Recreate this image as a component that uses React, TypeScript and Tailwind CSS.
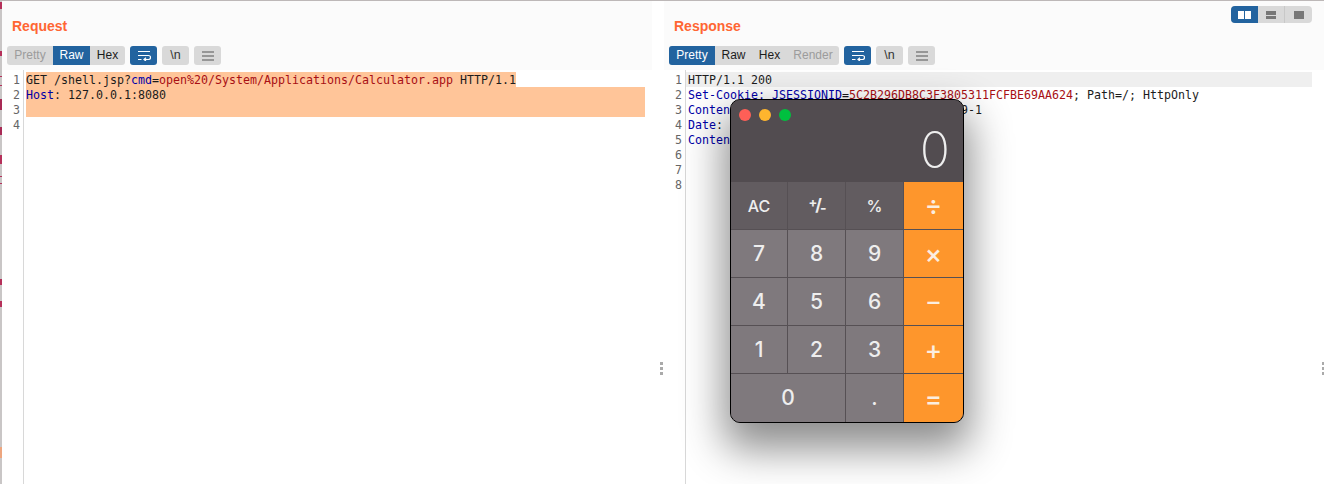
const tabWidths: Record<string, string> = {
  Pretty: "w-[46px]",
  Raw: "w-[37px]",
  Hex: "w-[35px]",
  Render: "w-[52px]",
};

const Tabs = ({ items, active, disabled }: { items: string[]; active: string; disabled: string[] }) => (
  <div className="flex h-[19px] overflow-hidden rounded-[3px] bg-[#d9d9d9] text-[12px] leading-[19px]">
    {items.map((t) => (
      <div
        key={t}
        className={
          "text-center " +
          tabWidths[t] +
          (t === active ? " bg-[#22639f] text-white" : disabled.includes(t) ? " text-[#9c9c9c]" : " text-[#1c1c1c]")
        }
      >
        {t}
      </div>
    ))}
  </div>
);

const WrapButton = () => (
  <div className="flex h-[19px] w-[27px] items-center justify-center rounded-[3px] bg-[#22639f]">
    <svg width="14" height="11" viewBox="0 0 14 11" fill="none" stroke="#fff" strokeWidth="1.2">
      <path d="M1 1.5h12M1 5.5h10.5a2 2 0 0 1 0 4H7M9 7.8 7 9.5l2 1.5M1 9.5h3.5" />
    </svg>
  </div>
);

const NewlineButton = () => (
  <div className="flex h-[19px] w-[27px] items-center justify-center rounded-[3px] bg-[#d9d9d9] text-[12.5px] text-[#333]">
    \n
  </div>
);

const MenuButton = () => (
  <div className="flex h-[19px] w-[27px] items-center justify-center rounded-[3px] bg-[#d9d9d9]">
    <svg width="12" height="10" viewBox="0 0 12 10" stroke="#555" strokeWidth="1.1">
      <path d="M0 1h12M0 5h12M0 9h12" />
    </svg>
  </div>
);

const Line = ({ n, children, className }: { n: number; children?: React.ReactNode; className?: string }) => (
  <div className="flex h-[15px] leading-[17px]">
    <div className="w-[21px] shrink-0 pr-[3px] text-right text-[#666]">{n}</div>
    <div className={"ml-[3px] h-[15px] whitespace-pre " + (className ?? "flex-1")}>{children}</div>
  </div>
);

type KeyDef = { label: React.ReactNode; id: string; kind: "top" | "num" | "op"; wide?: boolean; size: string };

const Key = ({ label, kind, wide, size }: KeyDef) => (
  <div
    className={
      "flex items-center justify-center font-medium " +
      size +
      (wide ? " col-span-2" : "") +
      (kind === "top"
        ? " bg-[#625c60] text-[#eeeeee]"
        : kind === "num"
          ? " bg-[#7f797d] text-[#eeeeee]"
          : " bg-[#fe962c] text-[#fbeee0]")
    }
  >
    {label}
  </div>
);

const keys: KeyDef[] = [
  { id: "ac", label: "AC", kind: "top", size: "text-[16px]" },
  {
    id: "sign",
    label: (
      <span className="font-bold tracking-[-2px]">
        <span className="text-[13px] [vertical-align:4px]">+</span>
        <span className="text-[17px]">/</span>
        <span className="text-[14px] [vertical-align:-2px]">-</span>
      </span>
    ),
    kind: "top",
    size: "text-[16px]",
  },
  { id: "pct", label: "%", kind: "top", size: "text-[16px]" },
  { id: "div", label: "÷", kind: "op", size: "text-[26px]" },
  { id: "7", label: "7", kind: "num", size: "text-[21px]" },
  { id: "8", label: "8", kind: "num", size: "text-[21px]" },
  { id: "9", label: "9", kind: "num", size: "text-[21px]" },
  { id: "mul", label: "×", kind: "op", size: "text-[26px]" },
  { id: "4", label: "4", kind: "num", size: "text-[21px]" },
  { id: "5", label: "5", kind: "num", size: "text-[21px]" },
  { id: "6", label: "6", kind: "num", size: "text-[21px]" },
  { id: "sub", label: "–", kind: "op", size: "text-[24px]" },
  { id: "1", label: "1", kind: "num", size: "text-[21px]" },
  { id: "2", label: "2", kind: "num", size: "text-[21px]" },
  { id: "3", label: "3", kind: "num", size: "text-[21px]" },
  { id: "add", label: "+", kind: "op", size: "text-[26px]" },
  { id: "0", label: "0", kind: "num", wide: true, size: "text-[21px]" },
  { id: "dot", label: ".", kind: "num", size: "text-[21px]" },
  { id: "eq", label: "=", kind: "op", size: "text-[26px]" },
];

const Calculator = () => (
  <div className="absolute left-[730px] top-[98px] flex h-[324px] w-[234px] flex-col overflow-hidden rounded-[10px] border border-black bg-[#565054] font-['Inter',sans-serif] shadow-[0_20px_42px_6px_rgba(0,0,0,0.45)]">
    <div className="flex h-[82px] flex-col bg-[#524c50]">
      <div className="flex gap-[8px] px-[8px] pt-[9px]">
        <div className="h-[12px] w-[12px] rounded-full bg-[#fe5f57]" />
        <div className="h-[12px] w-[12px] rounded-full bg-[#feb52e]" />
        <div className="h-[12px] w-[12px] rounded-full bg-[#00c03f]" />
      </div>
      <div className="mt-[4px] pr-[13px] text-right text-[50px] font-extralight leading-[50px] text-[#eeeeee]">0</div>
    </div>
    <div className="grid flex-1 grid-cols-[56px_57px_57px_59px] grid-rows-[47px_47px_47px_47px_1fr] gap-px bg-[#565054]">
      {keys.map((k) => (
        <Key key={k.id} {...k} />
      ))}
    </div>
  </div>
);

const Handle = () => (
  <div className="flex flex-col gap-[2px]">
    <div className="h-[3px] w-[3px] bg-[#aaa]" />
    <div className="h-[3px] w-[3px] bg-[#aaa]" />
    <div className="h-[3px] w-[3px] bg-[#aaa]" />
  </div>
);

const kw = "text-[#0000a8]";
const val = "text-[#a80f14]";

export default function App() {
  return (
    <div className="relative flex h-[484px] w-[1324px] overflow-hidden border-t border-[#bdb8b8] bg-white font-['Liberation_Sans',sans-serif]">
      <div className="flex w-[2px] shrink-0 flex-col bg-[#c9c6c6]">
        <div className="mt-[1px] h-[7px] bg-[#b5305a]" />
        <div className="mt-[42px] h-[5px] bg-[#b5305a]" />
        <div className="mt-[20px] h-[1px] bg-[#b5305a]" />
        <div className="mt-[8px] h-[1px] bg-[#b5305a]" />
        <div className="mt-[13px] h-[11px] bg-[#a82a55]" />
        <div className="mt-[17px] h-[8px] bg-[#a82a55]" />
        <div className="mt-[20px] h-[9px] bg-[#b5305a]" />
        <div className="mt-[12px] h-[1px] bg-[#b5305a]" />
        <div className="mt-[6px] h-[1px] bg-[#b5305a]" />
        <div className="mt-[95px] h-[6px] bg-[#b5305a]" />
        <div className="mt-[16px] h-[6px] bg-[#b5305a]" />
        <div className="mt-[140px] h-[11px] bg-[#eda67f]" />
      </div>

      <div className="flex w-[650px] shrink-0 flex-col">
        <div className="h-[69px] bg-[#fbfbfb] pl-[5px]">
          <div className="pl-[5px] pt-[16px] text-[14px] font-bold leading-[18px] text-[#ff6633]">Request</div>
          <div className="mt-[11px] flex gap-[5px]">
            <Tabs items={["Pretty", "Raw", "Hex"]} active="Raw" disabled={["Pretty"]} />
            <WrapButton />
            <NewlineButton />
            <MenuButton />
          </div>
        </div>
        <div className="relative flex-1 font-['DejaVu_Sans_Mono',monospace] text-[11.63px] text-[#1c1c1c]">
          <div className="absolute bottom-0 left-[21px] top-0 w-px bg-[#d8d8d8]" />
          <div className="pt-[2px]">
            <Line n={1} className="w-[490px] bg-[#ffc599]">
              GET /shell.jsp?<span className={kw}>cmd</span>=<span className={val}>open%20/System/Applications/Calculator.app</span> HTTP/1.1
            </Line>
            <div className="relative">
              <div className="absolute left-[24px] top-0 h-[30px] w-[619px] bg-[#ffc599]" />
              <div className="relative">
                <Line n={2}>
                  <span className={kw}>Host</span>: 127.0.0.1:8080
                </Line>
                <Line n={3} />
              </div>
            </div>
            <Line n={4} />
          </div>
        </div>
      </div>

      <div className="flex w-[12px] shrink-0 items-center justify-end pr-[1px]">
        <div className="mt-[252px]">
          <Handle />
        </div>
      </div>

      <div className="flex flex-1 flex-col">
        <div className="relative h-[69px] bg-[#fbfbfb] pl-[5px]">
          <div className="pl-[5px] pt-[16px] text-[14px] font-bold leading-[18px] text-[#ff6633]">Response</div>
          <div className="mt-[11px] flex gap-[5px]">
            <Tabs items={["Pretty", "Raw", "Hex", "Render"]} active="Pretty" disabled={["Render"]} />
            <WrapButton />
            <NewlineButton />
            <MenuButton />
          </div>
          <div className="absolute right-[12px] top-[5px] flex h-[17px] w-[81px] overflow-hidden rounded-[4px] bg-[#d9d9d9]">
            <div className="flex w-[27px] items-center justify-center bg-[#22639f]">
              <div className="flex gap-px">
                <div className="h-[8px] w-[6px] bg-white" />
                <div className="h-[8px] w-[6px] bg-white" />
              </div>
            </div>
            <div className="flex w-[27px] flex-col items-center justify-center gap-px border-r border-[#c8c8c8]">
              <div className="h-[4px] w-[10px] bg-[#777]" />
              <div className="h-[3px] w-[10px] bg-[#777]" />
            </div>
            <div className="flex w-[27px] items-center justify-center">
              <div className="h-[8px] w-[10px] bg-[#777]" />
            </div>
          </div>
        </div>
        <div className="relative flex-1 font-['DejaVu_Sans_Mono',monospace] text-[11.63px] text-[#1c1c1c]">
          <div className="absolute bottom-0 left-[21px] top-0 w-px bg-[#d8d8d8]" />
          <div className="relative pt-[2px]">
            <div className="absolute left-[22px] top-[2px] h-[15px] w-[626px] bg-[#efefef]" />
            <div className="relative">
              <Line n={1}>HTTP/1.1 200</Line>
              <Line n={2}>
                <span className={kw}>Set-Cookie: JSESSIONID</span>=<span className={val}>5C2B296DB8C3F3805311FCFBE69AA624</span>; Path=/; HttpOnly
              </Line>
              <Line n={3}>
                <span className={kw}>Content-Type</span>: text/html;charset=ISO-8859-1
              </Line>
              <Line n={4}>
                <span className={kw}>Date</span>:
              </Line>
              <Line n={5}>
                <span className={kw}>Content-Length</span>: 0
              </Line>
              <Line n={6} />
              <Line n={7} />
              <Line n={8} />
            </div>
          </div>
        </div>
      </div>

      <div className="absolute right-[-1px] top-[361px]">
        <Handle />
      </div>

      <Calculator />
    </div>
  );
}
